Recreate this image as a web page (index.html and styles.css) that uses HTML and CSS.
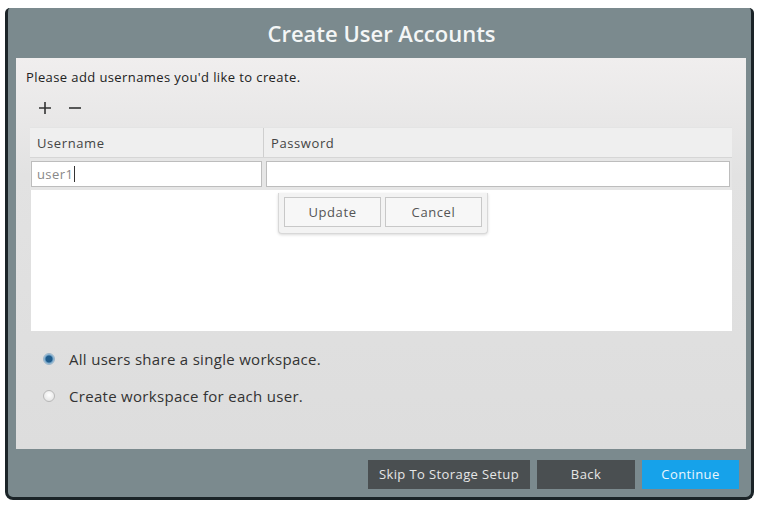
FILE: index.html
```html
<!DOCTYPE html>
<html>
<head>
<meta charset="utf-8">
<link rel="stylesheet" href="styles.css">
</head>
<body>
<div class="dialog">
  <div class="titlebar">Create User Accounts</div>
  <div class="content">
    <div class="intro">Please add usernames you'd like to create.</div>
    <div class="tools">
      <svg width="14" height="14" viewBox="0 0 14 14"><path d="M7 1v12M1 7h12" stroke="#333" stroke-width="1.6"/></svg>
      <svg width="14" height="14" viewBox="0 0 14 14"><path d="M1 7h12" stroke="#333" stroke-width="1.6"/></svg>
    </div>
    <div class="table">
      <div class="thead">
        <div class="th th-user">Username</div>
        <div class="th th-pass">Password</div>
      </div>
      <div class="editrow">
        <div class="field field-user">user1<span class="caret"></span></div>
        <div class="field field-pass"></div>
      </div>
      <div class="tbody">
        <div class="popup">
          <div class="pbtn">Update</div>
          <div class="pbtn">Cancel</div>
        </div>
      </div>
    </div>
    <div class="options">
      <div class="opt"><span class="radio on"></span>All users share a single workspace.</div>
      <div class="opt"><span class="radio"></span>Create workspace for each user.</div>
    </div>
  </div>
  <div class="footer">
    <div class="btn dark skip">Skip To Storage Setup</div>
    <div class="btn dark back">Back</div>
    <div class="btn blue cont">Continue</div>
  </div>
</div>
</body>
</html>
```
FILE: styles.css
```css
html, body {
  margin: 0;
  padding: 0;
  background: #ffffff;
}
body {
  font-family: "Open Sans", "Noto Sans", sans-serif;
  color: #333;
}
.dialog {
  margin: 8px 0 0 5px;
  width: 743px;
  height: 489px;
  background: #7b8a8e;
  border-left: 3px solid #1b2428;
  border-right: 3px solid #1b2428;
  border-bottom: 3px solid #1b2428;
  border-radius: 5px 5px 8px 8px;
  display: flex;
  flex-direction: column;
}
.titlebar {
  height: 50px;
  display: flex;
  align-items: center;
  justify-content: center;
  color: #f4f6f6;
  font-size: 22px;
  font-weight: 600;
  padding-left: 4px;
}
.content {
  height: 391px;
  margin: 0 5px 0 8px;
  background: linear-gradient(#f0eeee, #e2e2e2 30%, #dddddd);
  display: flex;
  flex-direction: column;
}
.intro {
  font-size: 13px;
  letter-spacing: 0.4px;
  height: 18px;
  line-height: 18px;
  margin: 10px 0 0 10px;
  color: #222;
}
.tools {
  height: 24px;
  margin: 10px 0 0 22px;
  display: flex;
  gap: 16px;
  align-items: center;
}
.table {
  margin: 7px 14px 0 14px;
  display: flex;
  flex-direction: column;
}
.thead {
  height: 29px;
  display: flex;
  background: #efefef;
  border-top: 1px solid #e4e4e4;
  border-bottom: 1px solid #d6d6d6;
}
.th {
  font-size: 13px;
  letter-spacing: 0.6px;
  color: #444;
  display: flex;
  align-items: center;
  padding-left: 7px;
}
.th-user {
  width: 226px;
  border-right: 1px solid #cfcfcf;
}
.th-pass {
  flex: 1;
}
.editrow {
  height: 32px;
  display: flex;
  align-items: center;
  gap: 4px;
  padding: 0 2px 0 1px;
  background: #e6e6e6;
}
.field {
  height: 26px;
  background: #ffffff;
  border: 1px solid #bdbdbd;
  box-sizing: border-box;
  font-size: 13px;
  letter-spacing: 0.4px;
  color: #888;
  display: flex;
  align-items: center;
  padding-left: 5px;
}
.field-user {
  width: 231px;
}
.field-pass {
  flex: 1;
}
.caret {
  display: inline-block;
  width: 1px;
  height: 16px;
  background: #333;
  margin-left: 1px;
}
.tbody {
  height: 141px;
  background: #ffffff;
  position: relative;
  border-left: 1px solid #e0e0e0;
}
.popup {
  position: absolute;
  left: 247px;
  top: 3px;
  width: 210px;
  height: 41px;
  box-sizing: border-box;
  background: #f3f3f3;
  border: 1px solid #d8d8d8;
  border-top: none;
  border-radius: 0 0 4px 4px;
  box-shadow: 0 1px 3px rgba(0,0,0,0.15);
  display: flex;
  gap: 4px;
  padding: 4px 0 0 5px;
}
.pbtn {
  width: 97px;
  height: 30px;
  box-sizing: border-box;
  background: #f7f7f7;
  border: 1px solid #c8c8c8;
  font-size: 13px;
  letter-spacing: 0.6px;
  color: #555;
  display: flex;
  align-items: center;
  justify-content: center;
}
.options {
  margin: 17px 0 0 27px;
  display: flex;
  flex-direction: column;
  gap: 15px;
}
.opt {
  height: 22px;
  display: flex;
  align-items: center;
  font-size: 15px;
  letter-spacing: 0.3px;
  color: #333;
}
.radio {
  width: 12px;
  height: 12px;
  border-radius: 50%;
  box-sizing: border-box;
  border: 1px solid #b8b8b8;
  background: radial-gradient(circle at 50% 40%, #ffffff, #dedede);
  margin-right: 14px;
}
.radio.on {
  border-color: #9ab4c8;
  background: radial-gradient(circle, #1f5c8c 0 3px, #6d9fc4 4px, #cfe0ec 6px);
}
.footer {
  height: 48px;
  display: flex;
  align-items: center;
  justify-content: flex-end;
  gap: 7px;
  padding-right: 12px;
  padding-top: 2px;
  box-sizing: border-box;
}
.btn {
  height: 29px;
  display: flex;
  align-items: center;
  justify-content: center;
  font-size: 13px;
  letter-spacing: 0.4px;
}
.dark {
  background: #4a4f51;
  color: #e6e6e6;
}
.blue {
  background: #16a2ea;
  color: #eaf6fd;
}
.skip { width: 162px; }
.back { width: 98px; }
.cont { width: 97px; }
```
